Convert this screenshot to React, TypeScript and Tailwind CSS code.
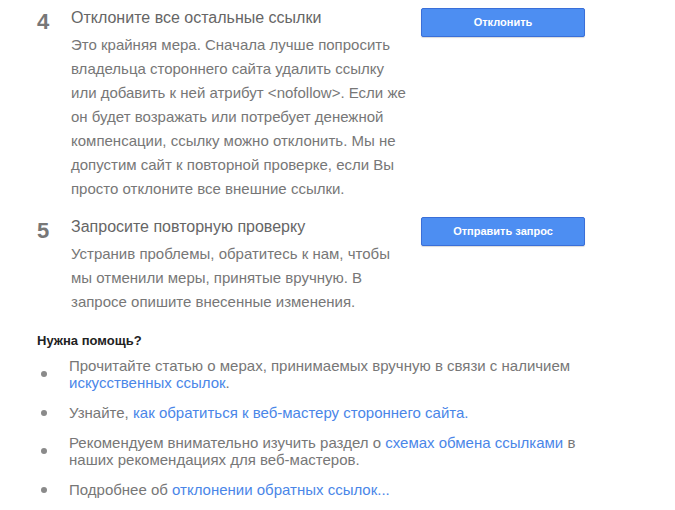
import React from 'react';

// Шаги и блок помощи
const steps = [
  {
    num: '4',
    title: 'Отклоните все остальные ссылки',
    body: 'Это крайняя мера. Сначала лучше попросить владельца стороннего сайта удалить ссылку или добавить к ней атрибут <nofollow>. Если же он будет возражать или потребует денежной компенсации, ссылку можно отклонить. Мы не допустим сайт к повторной проверке, если Вы просто отклоните все внешние ссылки.',
    button: 'Отклонить',
  },
  {
    num: '5',
    title: 'Запросите повторную проверку',
    body: 'Устранив проблемы, обратитесь к нам, чтобы мы отменили меры, принятые вручную. В запросе опишите внесенные изменения.',
    button: 'Отправить запрос',
  },
];

const Link: React.FC<{ children: React.ReactNode }> = ({ children }) => (
  <a href="#" className="text-[#4a86e8]">
    {children}
  </a>
);

const Bullet: React.FC<{ children: React.ReactNode }> = ({ children }) => (
  <li className="flex items-center">
    <span className="ml-[4px] w-[6px] h-[6px] rounded-full bg-[#8a8a8a] shrink-0" />
    <span className="ml-[22px] w-[520px] text-[15px] leading-[17px] text-[#777]">{children}</span>
  </li>
);

export default function App() {
  return (
    <div
      className="w-[675px] h-[510px] bg-white overflow-hidden pl-[37px] pt-[6px]"
      style={{ fontFamily: '"Liberation Sans", Arial, sans-serif' }}
    >
      <div className="flex flex-col gap-[14px]">
        {steps.map((s) => (
          <div key={s.num} className="flex items-start">
            <div className="w-[34px] pt-[4px] text-[22px] leading-6 font-bold text-[#777]">{s.num}</div>
            <div className="w-[336px]">
              <div className="text-[16px] leading-6 text-[#666]">{s.title}</div>
              <p className="mt-[3px] text-[15px] leading-6 text-[#777]">{s.body}</p>
            </div>
            <button className="ml-[14px] mt-[2px] w-[164px] h-[29px] bg-[#4d8ef2] border border-[#3a6fd8] rounded-[2px] shadow-[0_1px_1px_rgba(0,0,0,0.15)] text-white text-[11px] font-bold">
              {s.button}
            </button>
          </div>
        ))}
      </div>

      <div className="mt-[18px] text-[13px] leading-[18px] font-bold text-[#222]">Нужна помощь?</div>

      <ul className="mt-[7px] flex flex-col gap-[13px]">
        <Bullet>
          Прочитайте статью о мерах, принимаемых вручную в связи с наличием <Link>искусственных ссылок</Link>.
        </Bullet>
        <Bullet>
          Узнайте, <Link>как обратиться к веб-мастеру стороннего сайта.</Link>
        </Bullet>
        <Bullet>
          Рекомендуем внимательно изучить раздел о <Link>схемах обмена ссылками</Link> в наших рекомендациях для веб-мастеров.
        </Bullet>
        <Bullet>
          Подробнее об <Link>отклонении обратных ссылок...</Link>
        </Bullet>
      </ul>
    </div>
  );
}
